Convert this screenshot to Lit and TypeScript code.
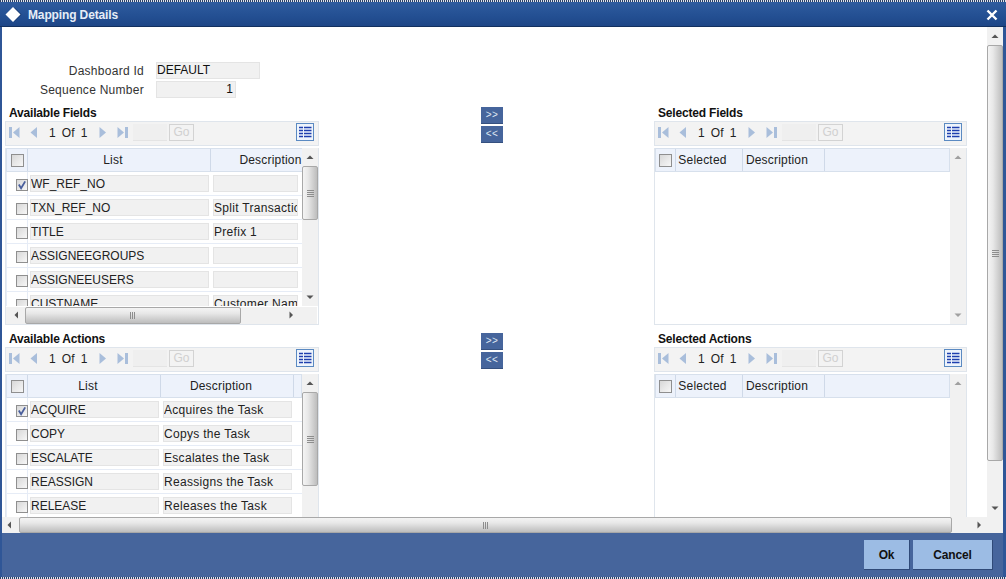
import { LitElement, html, css } from "lit";
import { customElement } from "lit/decorators.js";

const arrow = (dir: string) => {
  const paths: Record<string, string> = {
    up: "M4 2.500 L7.500 6 L0.500 6Z",
    down: "M0.500 2.500 L7.500 2.500 L4 6Z",
    left: "M2.500 4 L6 0.500 L6 7.500Z",
    right: "M2.500 0.500 L6 4 L2.500 7.500Z",
  };
  return html`<svg width="8" height="8" viewBox="0 0 8 8"><path d=${paths[dir]} fill="currentColor"></path></svg>`;
};

const vgrip = html`<svg width="7" height="8" viewBox="0 0 7 8"><path d="M0 1.500H7M0 3.500H7M0 5.500H7M0 7.500H7" stroke="#8d8d8d"></path></svg>`;
const hgrip = html`<svg width="8" height="7" viewBox="0 0 8 7"><path d="M1.500 0V7M3.500 0V7M5.500 0V7" stroke="#8d8d8d"></path></svg>`;

const vbar = (thumb: number, cls = "") => html`
  <div class="vbar ${cls}">
    <div class="vend">${arrow("up")}</div>
    ${thumb ? html`<div class="vthumb" style="height:${thumb}px">${vgrip}</div>` : ""}
    <div class="fill"></div>
    <div class="vend">${arrow("down")}</div>
  </div>`;

const hbar = (thumb: number, cls = "") => html`
  <div class="hbar ${cls}">
    <div class="hend">${arrow("left")}</div>
    <div class="hthumb" style="width:${thumb}px">${hgrip}</div>
    <div class="fill"></div>
    <div class="hend">${arrow("right")}</div>
  </div>`;

const check = (on = false) => html`
  <span class="cb">${on
    ? html`<svg width="10" height="10" viewBox="0 0 11 11"><path d="M2 5 L4.500 9 L9 1.500" fill="none" stroke="#4a5f9c" stroke-width="2"></path></svg>`
    : ""}</span>`;

const pager = () => html`
  <div class="pager">
    <svg class="pi" width="11" height="11" viewBox="0 0 11 11"><path d="M0 0H3V11H0Z M10.500 0V11L4 5.500Z" fill="#a9bedb"></path></svg>
    <svg class="pi prev" width="8" height="11" viewBox="0 0 8 11"><path d="M7 0V11L0.500 5.500Z" fill="#a9bedb"></path></svg>
    <span class="count">1&nbsp;&nbsp;Of&nbsp;&nbsp;1</span>
    <svg class="pi" width="8" height="11" viewBox="0 0 8 11"><path d="M0.500 0V11L7 5.500Z" fill="#a9bedb"></path></svg>
    <svg class="pi last" width="11" height="11" viewBox="0 0 11 11"><path d="M0.500 0V11L7 5.500Z M8 0H11V11H8Z" fill="#a9bedb"></path></svg>
    <span class="pinput"></span>
    <span class="go">Go</span>
    <span class="fill"></span>
    <svg class="listicon" width="18" height="18" viewBox="0 0 18 18">
      <rect x="0.500" y="0.500" width="17" height="17" fill="#eef4fc" stroke="#5b8ac2"></rect>
      <path d="M3 4.500H7M8 4.500H15.500M3 7.500H7M8 7.500H15.500M3 10.500H7M8 10.500H15.500M3 13.500H7M8 13.500H15.500" stroke="#1f3fae" stroke-width="1.600"></path>
    </svg>
  </div>`;

const fields: [string, string][] = [
  ["WF_REF_NO", ""],
  ["TXN_REF_NO", "Split Transaction"],
  ["TITLE", "Prefix 1"],
  ["ASSIGNEEGROUPS", ""],
  ["ASSIGNEEUSERS", ""],
  ["CUSTNAME", "Customer Name"],
];
const actions: [string, string][] = [
  ["ACQUIRE", "Acquires the Task"],
  ["COPY", "Copys the Task"],
  ["ESCALATE", "Escalates the Task"],
  ["REASSIGN", "Reassigns the Task"],
  ["RELEASE", "Releases the Task"],
];

const availTable = (rows: [string, string][], w1: number, wh: number, wr: number, cls: string) => html`
  <div class="tview ${cls}">
    <div class="thead">
      <div class="hc hchk">${check()}</div>
      <div class="hc" style="width:${w1}px">List</div>
      <div class="hc" style="width:${wh}px">Description</div>
      <div class="hc hfill"></div>
    </div>
    ${rows.map(
      (r, i) => html`
        <div class="row">
          <div class="rchk">${check(i === 0)}</div>
          <div class="rcell" style="width:${w1}px"><span class="tf">${r[0]}</span></div>
          <div class="rcell" style="width:${wr}px"><span class="tf lc">${r[1]}</span></div>
        </div>`
    )}
  </div>`;

const selectedHead = () => html`
  <div class="thead">
    <div class="hc hchk2">${check()}</div>
    <div class="hc sel">Selected</div>
    <div class="hc desc">Description</div>
    <div class="hc hfill"></div>
  </div>`;

const section = (title: string, body: unknown) => html`
  <section>
    <div class="sech">${title}</div>
    ${pager()}
    ${body}
  </section>`;

const movers = () => html`
  <div class="mid"><span class="mv">&gt;&gt;</span><span class="mv">&lt;&lt;</span></div>`;

@customElement("app-root")
export class AppRoot extends LitElement {
  static styles = css`
    :host {
      display: flex;
      flex-direction: column;
      width: 1006px;
      height: 579px;
      background: #46659c;
      font-family: "Liberation Sans", Arial, sans-serif;
      font-size: 12px;
      color: #111;
      overflow: hidden;
    }
    .dots {
      height: 2px;
      flex: none;
      background: repeating-linear-gradient(90deg, #2a3f66 0 1px, #dfe5ee 1px 2px);
    }
    .frame {
      flex: 1;
      min-height: 0;
      display: flex;
      flex-direction: column;
      border-left: 2px solid #2f5697;
      border-right: 3px solid #2f5697;
    }
    .title {
      flex: none;
      height: 25px;
      box-sizing: border-box;
      display: flex;
      align-items: center;
      gap: 6px;
      margin: 0 -3px 0 -2px;
      padding: 1px 8px 0 5px;
      background: linear-gradient(#2f5c9f, #234f92 60%, #1e4687);
      border-bottom: 1px solid #12305f;
      color: #e6edf7;
      font-weight: bold;
      letter-spacing: -0.13px;
    }
    .body {
      flex: none;
      height: 490px;
      display: flex;
      background: #fff;
      overflow: hidden;
    }
    .main {
      flex: 1;
      min-width: 0;
      box-sizing: border-box;
      padding: 34px 0 0 3px;
    }
    .form {
      display: grid;
      grid-template-columns: 139px auto;
      grid-auto-rows: 19px;
      column-gap: 12px;
      align-items: center;
      color: #333;
      height: 44px;
    }
    .form label { text-align: right; letter-spacing: 0.27px; }
    .tf0 {
      display: block;
      box-sizing: border-box;
      height: 17px;
      line-height: 14px;
      background: #f1f1f1;
      border: 1px solid #e4e4e4;
      color: #111;
    }
    .w1 { width: 104px; }
    .w2 { width: 80px; text-align: right; padding-right: 2px; }
    .grid {
      display: grid;
      grid-template-columns: 314px 335px 313px;
      grid-template-rows: 226px 186px;
    }
    .sech {
      height: 16px;
      line-height: 16px;
      padding-left: 4px;
      font-weight: bold;
      color: #111;
      letter-spacing: -0.18px;
    }
    .mid {
      display: flex;
      flex-direction: column;
      align-items: center;
      padding: 2px 0 0 11px;
      gap: 2px;
      box-sizing: border-box;
    }
    .mv {
      width: 22px;
      height: 17px;
      box-sizing: border-box;
      background: #46659c;
      border-bottom: 1px solid #35507f;
      color: #dfe7f3;
      font-size: 10px;
      line-height: 15px;
      text-align: center;
      letter-spacing: 0.5px;
    }
    .pager {
      height: 25px;
      box-sizing: border-box;
      display: flex;
      align-items: center;
      padding: 0 4px 3px 3px;
      background: #f3f3f3;
      border: 1px solid #dfe5ec;
      color: #222;
    }
    .pi { flex: none; }
    .prev { margin-left: 10px; }
    .count {
      margin-left: 11px;
      padding-top: 2px;
      width: 50px;
      white-space: nowrap;
      word-spacing: -0.25px;
    }
    .last { margin-left: 10px; }
    .pinput {
      width: 34px;
      height: 16px;
      margin-left: 5px;
      background: #efefef;
      border-bottom: 1px solid #e4e4e4;
    }
    .go {
      box-sizing: border-box;
      width: 25px;
      height: 17px;
      margin-left: 2px;
      line-height: 15px;
      text-align: center;
      color: #d0d0d0;
      border: 1px solid #d3d3d3;
    }
    .fill { flex: 1; }
    .tbox {
      display: flex;
      flex-wrap: wrap;
      margin-top: 2px;
      border: 1px solid #dfe5ec;
      border-top: 0;
      box-sizing: border-box;
      overflow: hidden;
    }
    .tbox.h1 { height: 177px; }
    .tbox.h2 { height: 200px; border-bottom: 0; }
    .tview {
      overflow: hidden;
      flex: none;
      width: 296px;
      height: 158px;
      background: #fff;
    }
    .tview.tall { height: 200px; }
    .thead {
      display: flex;
      height: 24px;
      box-sizing: border-box;
      background: #edf2fb;
      border: 1px solid #d7e0ec;
      text-align: center;
      line-height: 23px;
      color: #222;
      letter-spacing: 0.2px;
    }
    .tview .thead { width: 400px; }
    .tview.tall .thead { width: 296px; }
    .hc {
      flex: none;
      box-sizing: border-box;
      padding-right: 12px;
      border-right: 1px solid #cfd9e8;
      white-space: nowrap;
      overflow: hidden;
    }
    .hchk, .hchk2 {
      padding-right: 0;
      display: flex;
      align-items: center;
      justify-content: center;
    }
    .hchk { width: 21px; }
    .hchk2 { width: 20px; }
    .hfill { flex: 1; padding: 0; border-right: 0; }
    .row {
      display: flex;
      height: 24px;
      box-sizing: border-box;
      border-bottom: 1px solid #e6ecf6;
      border-left: 1px solid #e6ecf6;
    }
    .rchk {
      flex: none;
      width: 21px;
      box-sizing: border-box;
      padding: 7px 0 0 9px;
      border-right: 1px solid #e6ecf6;
    }
    .rchk .cb { width: 12px; height: 12px; }
    .rcell {
      flex: none;
      box-sizing: border-box;
      padding: 3px 2px 0 2px;
    }
    .tf {
      display: block;
      height: 17px;
      line-height: 17px;
      box-sizing: border-box;
      background: #f1f1f1;
      border: 1px solid #e4e4e4;
      white-space: nowrap;
      overflow: hidden;
      color: #222;
    }
    .lc { letter-spacing: 0.3px; }
    .cb {
      display: block;
      width: 13px;
      height: 13px;
      box-sizing: border-box;
      border: 1px solid #8f8f8f;
      background: linear-gradient(135deg, #d8d8d8, #f7f7f7);
    }
    .cb svg { display: block; }
    .vbar {
      flex: none;
      width: 16px;
      height: 100%;
      display: flex;
      flex-direction: column;
      background: #f1f1f1;
    }
    .vbar.short { height: 158px; }
    .vbar.pale .vend { color: #a0a0a0; }
    .vend {
      flex: none;
      height: 18px;
      display: flex;
      align-items: center;
      justify-content: center;
      color: #555;
    }
    .vthumb {
      flex: none;
      box-sizing: border-box;
      background: linear-gradient(90deg, #f4f4f4, #e8e8e8 35%, #bdbdbd);
      border: 1px solid #a8a8a8;
      border-radius: 2px;
      display: flex;
      align-items: center;
      justify-content: center;
    }
    .hbar {
      flex: none;
      height: 17px;
      display: flex;
      background: #f1f1f1;
    }
    .hbar.inner { width: 311px; padding-right: 17px; box-sizing: border-box; }
    .hbar.outer { height: 16px; padding: 0 16px 0 0; }
    .hbar.outer .hend { width: 17px; padding-right: 3px; box-sizing: border-box; }
    .hbar.outer .hend:last-child { padding: 0; }
    .hend {
      flex: none;
      width: 19px;
      display: flex;
      align-items: center;
      justify-content: center;
      color: #555;
    }
    .hthumb {
      flex: none;
      box-sizing: border-box;
      background: linear-gradient(#f4f4f4, #e8e8e8 35%, #bdbdbd);
      border: 1px solid #a8a8a8;
      border-radius: 2px;
      display: flex;
      align-items: center;
      justify-content: center;
    }
    .sel { width: 67px; }
    .desc { width: 82px; }
    .selbody { flex: none; width: 295px; background: #fff; }
    .selbody .hc { padding-right: 13px; }
    .selbody .hchk2, .selbody .hfill { padding-right: 0; }
    .footer {
      flex: 1;
      display: flex;
      justify-content: flex-end;
      align-items: flex-start;
      gap: 3px;
      margin: 0 -3px 0 -2px;
      padding: 7px 13px 0 0;
    }
    .btn {
      box-sizing: border-box;
      height: 30px;
      line-height: 30px;
      text-align: center;
      background: #9cbce4;
      border-right: 1px solid #2f4a78;
      border-bottom: 1px solid #2f4a78;
      font-weight: bold;
      color: #111;
      letter-spacing: -0.15px;
    }
    .ok { width: 46px; }
    .cancel { width: 80px; }
  `;

  render() {
    return html`
      <div class="dots"></div>
      <div class="frame">
        <div class="title">
          <svg width="17" height="17" viewBox="0 0 17 17">
            <path d="M9.500 1.500 L16.500 8.500 L9.500 15.500 Z" fill="#16366c"></path>
            <path d="M8 1 L15.500 8.500 L8 16 L0.500 8.500Z" fill="#fff"></path>
          </svg>
          <span>Mapping Details</span>
          <span class="fill"></span>
          <svg width="12" height="12" viewBox="0 0 12 12"><path d="M1.500 1.500 L10.500 10.500 M10.500 1.500 L1.500 10.500" stroke="#fff" stroke-width="2.400"></path></svg>
        </div>
        <div class="body">
          <div class="main">
            <div class="form">
              <label>Dashboard Id</label><span class="tf0 w1">DEFAULT</span>
              <label>Sequence Number</label><span class="tf0 w2">1</span>
            </div>
            <div class="grid">
              ${section(
                "Available Fields",
                html`<div class="tbox h1">
                  ${availTable(fields, 183, 132, 89, "")}
                  ${vbar(54, "short")}
                  ${hbar(216, "inner")}
                </div>`
              )}
              ${movers()}
              ${section(
                "Selected Fields",
                html`<div class="tbox h1">
                  <div class="selbody">${selectedHead()}</div>
                  ${vbar(0, "pale")}
                </div>`
              )}
              ${section(
                "Available Actions",
                html`<div class="tbox h2">
                  ${availTable(actions, 133, 133, 133, "tall")}
                  ${vbar(94)}
                </div>`
              )}
              ${movers()}
              ${section(
                "Selected Actions",
                html`<div class="tbox h2">
                  <div class="selbody">${selectedHead()}</div>
                  ${vbar(0, "pale")}
                </div>`
              )}
            </div>
          </div>
          ${vbar(416)}
        </div>
        ${hbar(933, "outer")}
        <div class="footer">
          <div class="btn ok">Ok</div>
          <div class="btn cancel">Cancel</div>
        </div>
      </div>
      <div class="dots"></div>
    `;
  }
}
